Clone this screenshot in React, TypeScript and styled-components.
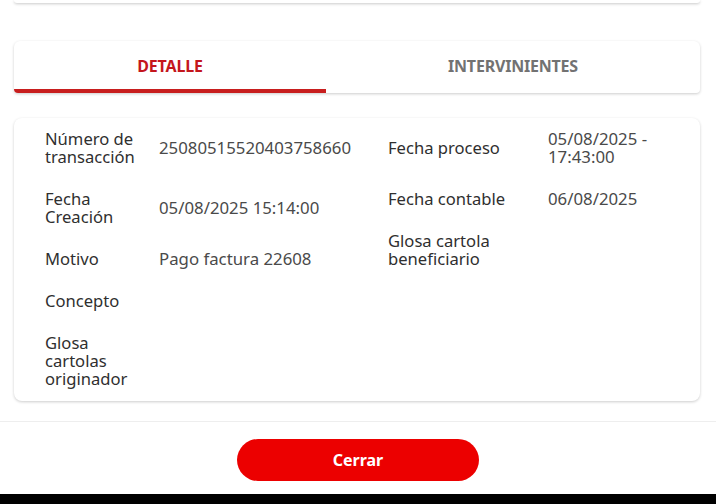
import React, { useState } from 'react';
import styled, { createGlobalStyle } from 'styled-components';

const GlobalStyle = createGlobalStyle`
  html, body {
    margin: 0;
    padding: 0;
    background: #ffffff;
    font-family: "Noto Sans", "Open Sans", sans-serif;
  }
`;

interface DetailRow {
  label: string;
  value?: string;
}

const leftRows: DetailRow[] = [
  { label: 'Número de transacción', value: '25080515520403758660' },
  { label: 'Fecha Creación', value: '05/08/2025 15:14:00' },
  { label: 'Motivo', value: 'Pago factura 22608' },
  { label: 'Concepto' },
  { label: 'Glosa cartolas originador' },
];

const rightRows: DetailRow[] = [
  { label: 'Fecha proceso', value: '05/08/2025 - 17:43:00' },
  { label: 'Fecha contable', value: '06/08/2025' },
  { label: 'Glosa cartola beneficiario' },
];

const Screen = styled.div`
  width: 716px;
  height: 504px;
  display: flex;
  flex-direction: column;
  overflow: hidden;
  background: #fff;
`;

const Content = styled.div`
  display: flex;
  flex-direction: column;
  padding: 0 16px 0 14px;
`;

const PrevCard = styled.div`
  height: 3px;
  background: #fff;
  border-radius: 0 0 8px 8px;
  box-shadow: 0 1px 3px rgba(0, 0, 0, 0.22);
`;

const TabsCard = styled.div`
  margin-top: 38px;
  height: 52px;
  display: flex;
  background: #fff;
  border-radius: 6px 6px 4px 4px;
  box-shadow: 0 1px 3px rgba(0, 0, 0, 0.2);
  overflow: hidden;
`;

const Tab = styled.button<{ $active: boolean; $width?: number }>`
  flex: ${(p) => (p.$width ? `0 0 ${p.$width}px` : '1')};
  border: none;
  background: transparent;
  padding: 2px 0 0;
  font-family: "Noto Sans", sans-serif;
  font-size: 16px;
  font-weight: 700;
  letter-spacing: -0.2px;
  color: ${(p) => (p.$active ? '#c4161c' : '#727272')};
  border-bottom: 4px solid ${(p) => (p.$active ? '#c81e1e' : 'transparent')};
  cursor: pointer;
`;

const DetailCard = styled.div`
  margin-top: 25px;
  display: flex;
  padding: 12px 31px 13px 31px;
  background: #fff;
  border-radius: 8px;
  box-shadow: 0 1px 3px rgba(0, 0, 0, 0.2);
`;

const Column = styled.div<{ $width?: number }>`
  display: flex;
  flex-direction: column;
  gap: 24px;
  ${(p) => (p.$width ? `flex: 0 0 ${p.$width}px;` : 'flex: 1;')}
`;

const Row = styled.div<{ $labelWidth: number }>`
  display: grid;
  grid-template-columns: ${(p) => p.$labelWidth}px 1fr;
  column-gap: 18px;
  align-items: center;
`;

const Label = styled.span`
  font-size: 16.6px;
  line-height: 18px;
  color: #2f2f2f;
`;

const Value = styled.span`
  font-size: 16.8px;
  line-height: 18px;
  color: #4a4a4a;
`;

const Footer = styled.div`
  margin-top: 20px;
  flex: 1;
  display: flex;
  justify-content: center;
  padding-top: 17px;
  border-top: 1px solid #eeeeee;
`;

const CloseButton = styled.button`
  width: 242px;
  height: 42px;
  border: none;
  border-radius: 21px;
  background: #ec0000;
  color: #fff;
  font-family: "Noto Sans", sans-serif;
  font-size: 16px;
  font-weight: 700;
  cursor: pointer;
`;

const NavBar = styled.div`
  flex: 0 0 10px;
  background: #000;
`;

const DetailColumn = ({ rows, labelWidth, width }: { rows: DetailRow[]; labelWidth: number; width?: number }) => (
  <Column $width={width}>
    {rows.map((r) => (
      <Row key={r.label} $labelWidth={labelWidth}>
        <Label>{r.label}</Label>
        <Value>{r.value}</Value>
      </Row>
    ))}
  </Column>
);

const App = () => {
  const [tab, setTab] = useState(0);
  return (
    <Screen>
      <GlobalStyle />
      <Content>
        <PrevCard />
        <TabsCard>
          <Tab type="button" $active={tab === 0} $width={312} onClick={() => setTab(0)}>
            DETALLE
          </Tab>
          <Tab type="button" $active={tab === 1} onClick={() => setTab(1)}>
            INTERVINIENTES
          </Tab>
        </TabsCard>
        <DetailCard>
          <DetailColumn rows={leftRows} labelWidth={96} width={343} />
          <DetailColumn rows={rightRows} labelWidth={142} />
        </DetailCard>
      </Content>
      <Footer>
        <CloseButton type="button">Cerrar</CloseButton>
      </Footer>
      <NavBar />
    </Screen>
  );
};

export default App;
